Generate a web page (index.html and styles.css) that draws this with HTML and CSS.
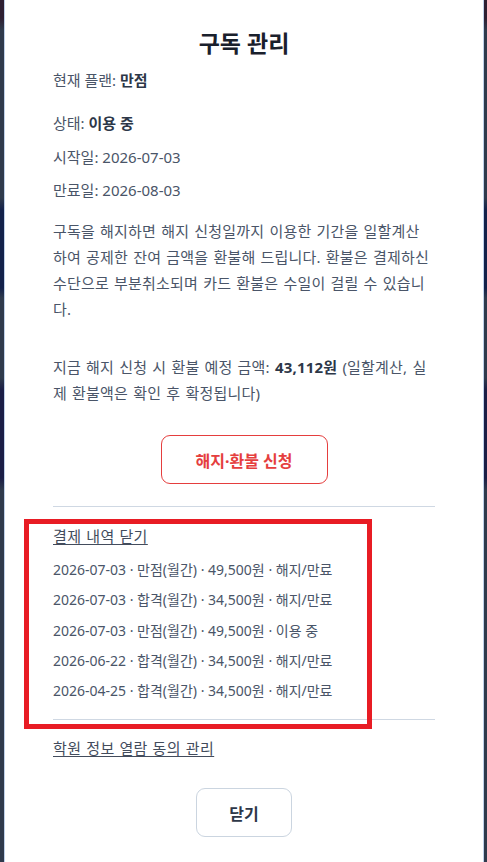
FILE: index.html
```html
<!DOCTYPE html>
<html lang="ko">
<head>
<meta charset="utf-8">
<title>구독 관리</title>
<link rel="stylesheet" href="styles.css">
</head>
<body>
<div class="backdrop">
  <div class="card">
    <h1 class="title">구독 관리</h1>
    <p class="info info-plan">현재 플랜: <strong>만점</strong></p>
    <p class="info info-status">상태: <strong>이용 중</strong></p>
    <p class="info info-start">시작일: 2026-07-03</p>
    <p class="info info-end">만료일: 2026-08-03</p>
    <p class="desc">구독을 해지하면 해지 신청일까지 이용한 기간을 일할계산하여 공제한 잔여 금액을 환불해 드립니다. 환불은 결제하신 수단으로 부분취소되며 카드 환불은 수일이 걸릴 수 있습니다.</p>
    <p class="refund">지금 해지 신청 시 환불 예정 금액: <strong>43,112원</strong> (일할계산, 실제 환불액은 확인 후 확정됩니다)</p>
    <div class="btn-row">
      <button class="btn btn-danger" type="button">해지·환불 신청</button>
    </div>
    <hr class="divider divider-top">
    <a class="link link-history" href="#">결제 내역 닫기</a>
    <ul class="history">
      <li>2026-07-03 · 만점(월간) · 49,500원 · 해지/만료</li>
      <li>2026-07-03 · 합격(월간) · 34,500원 · 해지/만료</li>
      <li>2026-07-03 · 만점(월간) · 49,500원 · 이용 중</li>
      <li>2026-06-22 · 합격(월간) · 34,500원 · 해지/만료</li>
      <li>2026-04-25 · 합격(월간) · 34,500원 · 해지/만료</li>
    </ul>
    <hr class="divider divider-bottom">
    <a class="link link-consent" href="#">학원 정보 열람 동의 관리</a>
    <div class="btn-row btn-row-close">
      <button class="btn btn-close" type="button">닫기</button>
    </div>
  </div>
  <div class="highlight"></div>
</div>
</body>
</html>
```

FILE: styles.css
```css
* { box-sizing: border-box; }

html, body {
  margin: 0;
  padding: 0;
  height: 100%;
}

body {
  font-family: "Noto Sans", "Noto Sans CJK KR", sans-serif;
  color: #4a5568;
  overflow: hidden;
}

.backdrop {
  position: relative;
  height: 862px;
  padding: 0 3px 0 4px;
  background: linear-gradient(to bottom,
    #2e1f32 0px, #2e1f32 18px,
    #2f3a4c 30px, #2f3a4c 198px,
    #13214a 210px, #13214a 288px,
    #2f3a4c 298px, #2f3a4c 378px,
    #1b1e46 390px, #1b1e46 478px,
    #2f3a4c 490px, #2f3a4c 862px);
}

.card {
  height: 862px;
  background: #ffffff;
  border-left: 1px solid #bfd1ea;
  border-right: 1px solid #bfd1ea;
  padding: 28px 48px 0 48px;
  display: flex;
  flex-direction: column;
}

.title {
  margin: 0;
  font-size: 23px;
  line-height: 30px;
  font-weight: 700;
  color: #1a202c;
  text-align: center;
}

.info, .desc, .refund {
  margin: 0;
  font-size: 15px;
  line-height: 26px;
}

.desc, .refund {
  max-width: 380px;
  letter-spacing: 0.2px;
  word-spacing: 1px;
}

.info strong, .refund strong {
  font-weight: 700;
  color: #2d3748;
  line-height: 1;
}

.info-plan { margin-top: 9px; }
.info-status { margin-top: 17px; }
.info-start { margin-top: 8px; }
.info-end { margin-top: 7px; }
.desc { margin-top: 15px; }
.refund { margin-top: 32px; }

.btn-row {
  display: flex;
  justify-content: center;
  margin-top: 29px;
}

.btn {
  font-family: inherit;
  font-size: 16px;
  font-weight: 700;
  background: #ffffff;
  border-radius: 9px;
  height: 49px;
  cursor: pointer;
}

.btn-danger {
  width: 167px;
  color: #e53e3e;
  border: 1px solid #e53e3e;
}

.btn-close {
  width: 96px;
  color: #2d3748;
  border: 1px solid #cbd5e0;
}

.btn-row-close { margin-top: 27px; }

.divider {
  margin: 0;
  border: 0;
  border-top: 1px solid #cfd8e3;
  height: 0;
}

.divider-top { margin-top: 22px; }
.divider-bottom { margin-top: 13px; }

.link {
  align-self: flex-start;
  font-size: 15px;
  line-height: 26px;
  letter-spacing: 0.4px;
  word-spacing: 0.5px;
  color: #434c5c;
  text-decoration: underline;
  text-decoration-thickness: 1px;
  text-underline-offset: 2px;
}

.link-history { margin-top: 16px; }
.link-consent { margin-top: 15px; }

.history {
  list-style: none;
  margin: 6px 0 0 0;
  padding: 0;
}

.history li {
  font-size: 14px;
  line-height: 30.25px;
  color: #4a5568;
}

.highlight {
  position: absolute;
  left: 24px;
  top: 519px;
  width: 348px;
  height: 210px;
  border: 5px solid #e81c24;
  pointer-events: none;
}
```
